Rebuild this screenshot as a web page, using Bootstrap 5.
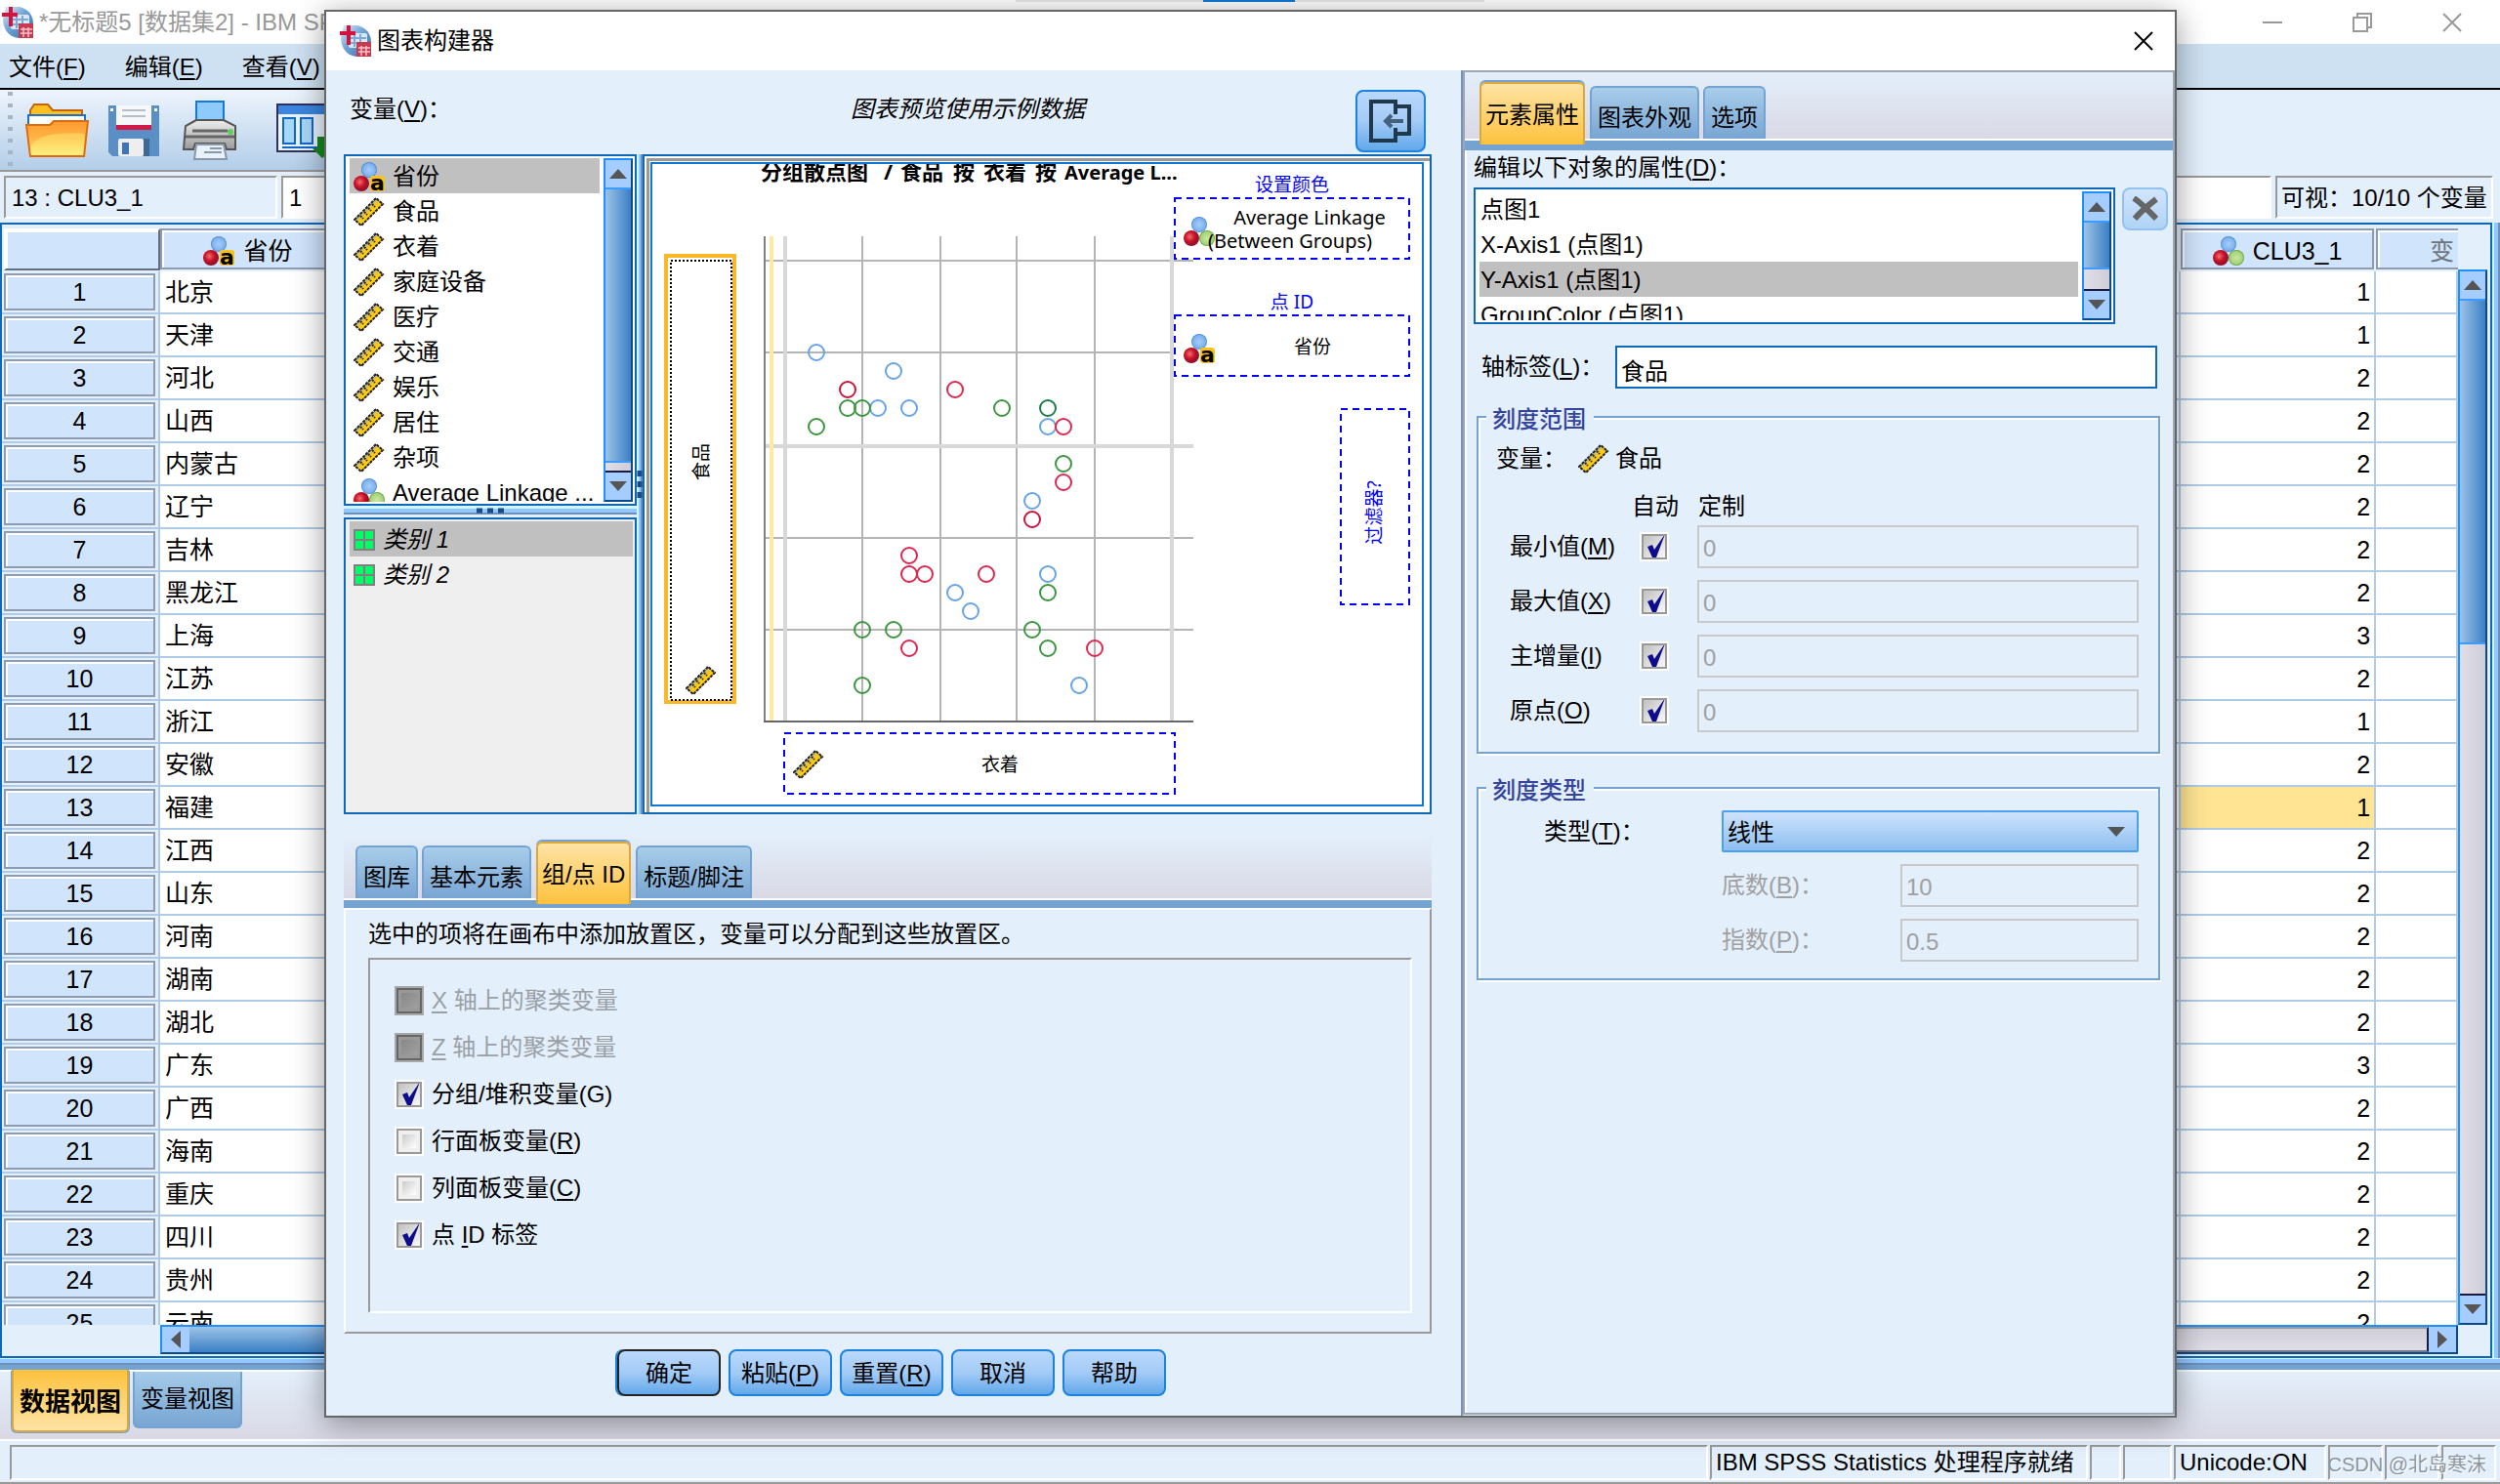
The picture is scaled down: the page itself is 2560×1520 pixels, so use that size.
<!DOCTYPE html>
<html lang="zh-CN">
<head>
<meta charset="utf-8">
<meta name="viewport" content="width=device-width, initial-scale=1">
<title>图表构建器</title>
<link href="https://cdn.jsdelivr.net/npm/bootstrap@5.3.0/dist/css/bootstrap.min.css" rel="stylesheet">
<style>
:root{--pane:#e3effb;--edge:#0f67b8;--band:#74a3d2;--sel:#c0c0c0;--line:#b0cbe6}
html,body{height:100%}
body{font:24px/32px "Liberation Sans","Noto Sans CJK SC",sans-serif;color:#000;background:var(--pane);overflow:hidden}
button,input,select{font:inherit;color:inherit}
svg{display:block;flex:none}
u{text-underline-offset:3px;text-decoration-thickness:2px}
.main-title{height:46px;background:#fff;color:#999;padding:0 3px 0 2px}
.doc-name{width:294px;margin-left:6px;overflow:hidden;white-space:nowrap}
.win-btn{border:0;background:none;padding:0;width:92px;display:flex;justify-content:center}
.stripe-top{left:1040px;top:0;width:480px;height:2px;background:linear-gradient(90deg,#e6e6e6 192px,#0f78d4 192px,#0f78d4 286px,#e6e6e6 286px)}
.menus{height:48px;background:#cee1f2;border-bottom:2px solid #000;padding:2px 0 0 9px;gap:40px}
.menus a{color:#000;text-decoration:none}
.tools{height:84px}
.tools-in{width:50%;height:84px;border-bottom:2px solid #999;background:linear-gradient(#edf4fc,#b3cee9);padding:2px 0 0 8px}
.grip{width:5px;height:80px;background:repeating-linear-gradient(#a9b4c2 0 4px,transparent 4px 12px)}
.tool{border:0;background:none;padding:0}
.info{height:52px;padding:4px 7px 4px 4px;gap:4px}
.sunk{border:2px solid #fff;border-top-color:#999;border-left-color:#999;padding:2px 6px 0;white-space:nowrap;display:flex;align-items:center}
input.sunk{background:#fff;border-radius:0;outline:0;min-width:0}
.sheet{border:2px solid var(--edge);padding-top:4px;min-height:0;position:relative}
.vsplit{width:8px;flex:none;background:linear-gradient(90deg,#c8fbff 2px,#94c6ff 2px,#94c6ff 6px,#6a90bb 6px)}
.clip{overflow:hidden;min-height:0;min-width:0}
.gtable{width:100%;table-layout:fixed;border-collapse:separate;border-spacing:0;font-size:25px}
.gtable th,.gtable td{height:44px;padding:0;font-weight:400;white-space:nowrap;overflow:hidden}
.gtable td{background:#fff;border-right:2px solid var(--line);border-bottom:2px solid var(--line);padding:0 5px;line-height:32px}
.gtable td.num{text-align:right;padding-right:4px}
.gtable td.hot{background:#ffe593}
.gtable tbody th{border-right:2px solid var(--line);border-bottom:2px solid var(--line);padding:2px 3px 2px 2px}
.keybox{height:38px;border:2px solid #8f9bb3;background:#d0e4fb;box-shadow:inset 2px 2px #fff;display:flex;align-items:center;justify-content:center;gap:9px;line-height:30px}
.gtable thead .keybox{height:42px;margin-right:2px;padding-top:4px}
.gtable thead th{vertical-align:top}
.gtable thead .corner .keybox{border-color:#fff #666f80 #666f80 #fff;margin:0 0 0 2px;height:43px}
.vbar,.hbar{border:2px solid #1e90ff;border-right-color:#0a4a8c;border-bottom-color:#0a4a8c;display:flex;flex:none}
.vbar{width:30px;flex-direction:column}
.hbar{height:30px}
.arr{background:#a5cdff;border:0;padding:0;display:flex;align-items:center;justify-content:center;flex:none}
.vbar .arr{height:28px}.hbar .arr{width:28px}
.vbar .thumb{background:linear-gradient(90deg,#9dc3e8,#3a80c4);border-top:2px solid #3d9bff;border-bottom:2px solid #3d9bff}
.vbar .rest{background:linear-gradient(90deg,#e0dee8,#cfcdd9);border-bottom:2px solid #1a1a40}
.hbar .thumb{background:linear-gradient(#9dc3e8,#3a80c4)}
.hbar .rest{background:linear-gradient(#d0ced9,#dfdde6);border-top:2px solid #999;border-bottom:2px solid #778;border-right:2px solid #1a1a40}
.hsplit{height:12px;background:linear-gradient(#c8fbff 1px,#94c6ff 1px,#94c6ff 5px,#6a90bb 5px,#6a90bb 7px,var(--band) 7px)}
.views{height:72px;border-top:2px solid #fff;background:linear-gradient(#e3effb,#d9d8e5);padding-left:12px;gap:4px}
.views button{border:2px solid var(--band);border-top:0;border-radius:0 0 6px 6px;height:58px;width:112px;padding:0;background:linear-gradient(#a5cbe9,#78a5d3);white-space:nowrap}
.views button.on{width:120px;height:64px;margin-top:-2px;padding-top:4px;background:linear-gradient(#fdc23d,#fee3a5);border-color:#dba93a;box-shadow:1px 1px var(--band),-1px 1px var(--band);font-weight:700;font-size:26px}
.status{height:46px;border-top:2px solid #fff;border-bottom:2px solid #999;padding:4px 4px 2px 10px;gap:2px}
.status .sunk{padding:0 4px;flex:none}
.csdn{right:14px;bottom:2px;font-size:20px;color:#8d959f;text-shadow:1px 1px #fff}
/* dialog window */
.dlg{left:332px;top:10px;right:331px;bottom:68px;background:var(--pane);border:2px solid #666;box-shadow:0 6px 30px rgba(0,0,0,.4);z-index:5}
.dlg-title{height:60px;background:#fff;padding:0 16px 0 14px;gap:6px}
.lpane{padding:0 30px 0 18px;min-width:0}
.lhead{height:86px;padding:20px 6px 0}
.skin{border:2px solid #1b82de;border-radius:8px;background:linear-gradient(#bad8fb,#a3cbf7 50%,#62a8ea);padding:0;display:flex;align-items:center;justify-content:center}
.frame{border:2px solid var(--edge);background:#fff;padding:2px 2px 2px 4px;overflow:hidden}
.vlist{margin:0;padding:0;list-style:none;overflow:hidden;flex:1 1 0;min-width:0;background:#fff}
.vlist li{height:36px;display:flex;align-items:center;gap:8px;padding:2px 0 0 4px;white-space:nowrap;line-height:34px}
.vlist li.on{background:var(--sel)}
.vlist.flush li{padding-left:1px}
.mid{height:676px}
.lcol{width:300px}
.mini-h{height:8px;margin:1px 0 3px;background:linear-gradient(#c8fbff 2px,#94c6ff 2px,#94c6ff 6px,#6a90bb 6px)}
.mini-v{width:6px;background:linear-gradient(90deg,#c8fbff 2px,#94c6ff 2px,#94c6ff 4px,#6a90bb 4px)}
.stage{border:2px solid var(--edge);padding:6px;background:#fff;box-shadow:inset 2px 2px #fff,inset 5px 5px #9a9a9a}
.stage-in{border:2px solid #0f78d4;background:#fff;overflow:hidden;height:660px}
.tabs{background:linear-gradient(var(--pane),#d9d8e5);border-bottom:2px solid #fff;align-items:flex-end;gap:4px;display:flex}
.tabs button{border:2px solid var(--band);border-bottom:0;border-radius:6px 6px 0 0;height:54px;padding:10px 6px 0;background:linear-gradient(#a8cdea,#78a5d3);white-space:nowrap;line-height:30px}
.tabs button.on{height:64px;margin:0 1px -6px;background:linear-gradient(#fee3a5,#fdc23d);border-color:#dba93a;box-shadow:0 -2px 0 0 var(--band);padding:2px 4px 0;position:relative}
.band{background:var(--band)}
.tpanel{height:436px;border-left:2px solid #fff;border-top:2px solid #fff;border-bottom:2px solid #999;border-right:2px solid #999;padding:9px 18px 0 23px}
.inset-box{height:364px;border:2px solid #fff;border-top-color:#999;border-left-color:#999;margin-top:8px;padding:18px 25px}
.opt{height:48px;gap:8px}
.opt.off{color:#9aa0a6}
.form-check-input.tick{width:30px;height:30px;margin:0;flex:none;border-radius:0;border:2px solid #fff;background:linear-gradient(135deg,#ccc,#fff) center/14px 14px no-repeat,#f0f0f0;box-shadow:inset 0 0 0 2px #999;opacity:1}
.form-check-input.tick:checked{background:url("data:image/svg+xml,%3Csvg xmlns='http://www.w3.org/2000/svg' viewBox='0 0 26 26'%3E%3Cpath d='M6 13l5-2 2 5L24 0 15 24h-4z' fill='%230c0c8c'/%3E%3C/svg%3E") center/26px no-repeat,linear-gradient(135deg,#bbb,#fff)}
.form-check-input.tick.dark:disabled{border-color:#a8a8a8;background:linear-gradient(135deg,#808080,#a8a8a8);box-shadow:inset 0 0 0 2px #666,inset 0 0 0 5px #999}
.acts{gap:8px;margin-top:16px;padding-left:8px}
.acts button{width:106px;height:48px;padding-top:2px}
.acts button.def{border-color:#222;box-shadow:-2px 0 #1b82de}
.divider{width:2px;background:#7a93b5}
.rpane{width:729px;flex:none;border:2px solid #9ca6b5;box-shadow:inset 2px 2px #fff;margin-bottom:1px}
.rbody{padding:2px 12px 0 9px}
.fld{border:2px solid #0f67b8;height:44px;border-radius:0;padding:6px 4px 2px;background:#fff;outline:0;min-width:0;width:100%}
.fld:disabled{border-color:#c9c9c9;background:var(--pane);color:#a0a0a0}
.set{border:2px solid var(--band);box-shadow:inset 2px 2px #fff,1px 2px #fff;position:relative}
.set>h2{position:absolute;left:8px;top:-14px;background:var(--pane);font-size:24px;line-height:32px;color:#35459c;margin:0;padding:0 8px 0 6px}
.scale-grid{display:grid;grid-template-columns:133px 59px 1fr;row-gap:12px;align-items:center;margin-top:3px}
.pick{appearance:none;border:2px solid #4aa0ec;border-radius:2px;height:43px;padding:2px 4px 0;width:100%;line-height:36px;background:url("data:image/svg+xml,%3Csvg xmlns='http://www.w3.org/2000/svg' viewBox='0 0 18 10'%3E%3Cpath d='M0 0h18L9 10z' fill='%23555'/%3E%3C/svg%3E") right 12px center/18px 10px no-repeat,linear-gradient(#cde2fc,#8dbff0)}
.type-grid{display:grid;grid-template-columns:182px 183px 1fr;row-gap:12px;align-items:center}
.dim{color:#a0a0a0}
</style>
<script src="https://cdn.jsdelivr.net/npm/bootstrap@5.3.0/dist/js/bootstrap.bundle.min.js"></script>
</head>
<body class="d-flex flex-column position-relative">
<svg width="0" height="0" class="position-absolute" aria-hidden="true">
<defs>
<radialGradient id="gb"><stop offset="0" stop-color="#a6cdf8"/><stop offset=".8" stop-color="#7fb2ee"/><stop offset="1" stop-color="#3f83cf"/></radialGradient>
<radialGradient id="gr" cx=".4" cy=".4"><stop offset="0" stop-color="#f07070"/><stop offset=".6" stop-color="#cc1428"/><stop offset="1" stop-color="#98102a"/></radialGradient>
<radialGradient id="gg"><stop offset="0" stop-color="#c8eaa0"/><stop offset=".8" stop-color="#a5d27c"/><stop offset="1" stop-color="#5b9c2f"/></radialGradient>
<linearGradient id="fo" x2="0" y2="1"><stop offset="0" stop-color="#ff9a2e"/><stop offset=".5" stop-color="#ffb648"/><stop offset="1" stop-color="#fff48a"/></linearGradient>
<linearGradient id="pr" x2="0" y2="1"><stop offset="0" stop-color="#eee"/><stop offset="1" stop-color="#999"/></linearGradient>
<linearGradient id="ba" x2="1" y2="1"><stop offset="0" stop-color="#e4eefa"/><stop offset=".45" stop-color="#6fa3d4"/><stop offset="1" stop-color="#2f6cab"/></linearGradient>
<symbol id="i-rule" viewBox="0 0 32 30"><path d="M1 23L23 1l7 6L8 29z" fill="#b9b98a"/><path d="M5 26L27 4l3 3L8 29l-3-3z" fill="#ffcb10"/><path d="M3 24L25 2l5 5L8 29z" fill="#ffcb10" opacity=".7"/><path d="M1 23L23 1l7 6L8 29z" fill="none" stroke="#222" stroke-width="2" stroke-dasharray="3 1"/><path d="M7 19l3 3M11 15l3 3M15 11l3 3M19 7l3 3" stroke="#222" stroke-width="2" stroke-dasharray="2 1"/></symbol>
<symbol id="i-nom" viewBox="0 0 32 30"><circle cx="16" cy="8" r="8" fill="url(#gb)"/><circle cx="8" cy="22" r="8" fill="url(#gr)"/><circle cx="24" cy="22" r="8" fill="url(#gg)"/></symbol>
<symbol id="i-str" viewBox="0 0 32 30"><circle cx="16" cy="8" r="8" fill="url(#gb)"/><circle cx="8" cy="22" r="8" fill="url(#gr)"/><rect x="17" y="14" width="15" height="16" rx="3" fill="#fbc21e"/><text x="17" y="29" font-family="DejaVu Sans" font-weight="700" font-size="22" fill="#000">a</text></symbol>
<symbol id="i-app" viewBox="0 0 32 32"><path d="M4 0h14c9 2 14 9 14 17v15H17C7 31 1 23 1 12z" fill="url(#ba)"/><rect x="9" y="8" width="19" height="15" rx="2" fill="#d9e7f7"/><path d="M10 13h17M10 18h17M15 9v13M21 9v13" stroke="#7fa8d4" stroke-width="2"/><path d="M9 0v20M0 8h16" stroke="#d3123d" stroke-width="4"/><rect x="17" y="17" width="15" height="15" fill="#c83a50"/><path d="M19 23h12M19 27h12M22 21v10M27 21v10" stroke="#f3c3ca" stroke-width="1.5"/></symbol>
<symbol id="i-up" viewBox="0 0 18 10"><path d="M9 0l9 10H0z" fill="#555"/></symbol>
<symbol id="i-dn" viewBox="0 0 18 10"><path d="M0 0h18L9 10z" fill="#555"/></symbol>
<symbol id="i-cat" viewBox="0 0 22 22"><path d="M0 0h22v22H0z" fill="#808080"/><path d="M2 2h8v8H2zM12 2h8v8h-8zM2 12h8v8H2zM12 12h8v8h-8z" fill="#00ff66"/></symbol>
</defs>
</svg>

<header class="main-title d-flex align-items-center position-relative">
  <svg width="32" height="32"><use href="#i-app"/></svg>
  <span class="doc-name me-auto">*无标题5 [数据集2] - IBM SPSS</span>
  <button class="win-btn" aria-label="最小化"><svg width="20" height="20"><path d="M0 10h20" stroke="#999" stroke-width="2"/></svg></button>
  <button class="win-btn" aria-label="还原"><svg width="20" height="20" fill="none" stroke="#999" stroke-width="2"><path d="M1 5h14v14H1zM5 5V1h14v14h-4"/></svg></button>
  <button class="win-btn" aria-label="关闭"><svg width="20" height="20"><path d="M1 1l18 18M19 1L1 19" stroke="#999" stroke-width="2"/></svg></button>
  <div class="stripe-top position-absolute"></div>
</header>
<nav class="menus d-flex align-items-center text-nowrap"><a href="#">文件(<u>F</u>)</a><a href="#">编辑(<u>E</u>)</a><a href="#">查看(<u>V</u>)</a></nav>
<div class="tools"><div class="tools-in d-flex align-items-center">
  <div class="grip"></div>
  <button class="tool ms-2 ps-1" aria-label="打开"><svg width="66" height="58" viewBox="0 0 66 58"><path d="M6 22V8l4-6h14l5 6h30v12" fill="#ffc01e" stroke="#c0650e" stroke-width="2"/><path d="M4 24V13h58v11" fill="#fff" stroke="#1c6fd0" stroke-width="2"/><path d="M2 23h24l4-4h35l-4 36H6z" fill="url(#fo)" stroke="#e06a0c" stroke-width="2"/><path d="M6 48c4-14 22-18 56-16l-2 22H7z" fill="#fff27a" opacity=".45"/></svg></button>
  <button class="tool ms-3 ps-1" aria-label="保存"><svg width="52" height="54" viewBox="0 0 52 54"><path d="M0 1h52v52H4l-4-4z" fill="#5a8fc5"/><path d="M8 1h36v24H8z" fill="#f5f7fa"/><path d="M14 6h24M14 12h24" stroke="#b8bec6" stroke-width="2"/><path d="M8 21h36v5H8z" fill="#d11a48"/><path d="M2 4h3v3H2zM47 4h3v3h-3z" fill="#fff"/><rect x="10" y="35" width="26" height="18" rx="2" fill="#eee"/><path d="M14 39h7v12h-7z" fill="#3d76b4"/><path d="M36 35h6v18h-6z" fill="#3f6894"/></svg></button>
  <button class="tool ms-4" aria-label="打印"><svg width="56" height="62" viewBox="0 0 56 62"><path d="M14 1h28v22H14z" fill="#8fcafc" stroke="#1879d2" stroke-width="2"/><path d="M14 20L3 26 1 50h10l2-6h30l2 6h9V26l-12-6z" fill="url(#pr)" stroke="#555" stroke-width="2"/><path d="M10 31h36M3 37h50" stroke="#666" stroke-width="3"/><circle cx="49" cy="32" r="3" fill="#5ad25a"/><path d="M14 45h28l3 15H12z" fill="#e8f2fd" stroke="#8a97a6" stroke-width="2"/><path d="M28 49h12M22 53h18" stroke="#8a97a6" stroke-width="2"/></svg></button>
  <button class="tool ms-4 ps-3" aria-label="重新调用对话框"><svg width="70" height="56" viewBox="0 0 70 56"><path d="M1 1h60v48H1z" fill="#eaf4fe" stroke="#30305c" stroke-width="2"/><path d="M2 2h58v9H2z" fill="#3a86e0"/><path d="M7 15h12v26H7zM25 15h12v26H25z" fill="#a8d8f8" stroke="#0f67c8" stroke-width="2"/><path d="M6 45h40" stroke="#0f67c8" stroke-width="2"/><path d="M42 34h10v12h6L47 56 37 46h5z" fill="#158a1e"/></svg></button>
</div></div>
<div class="info d-flex">
  <div class="sunk" style="width:280px">13 : CLU3_1</div>
  <input class="sunk flex-grow-1" value="1" aria-label="单元格值">
  <div class="sunk px-1" style="width:223px">可视：10/10 个变量</div>
</div>

<main class="d-flex flex-grow-1 clip">
  <section class="sheet d-flex flex-column flex-grow-1 clip">
    <div class="d-flex flex-grow-1 clip">
      <div class="clip flex-grow-1">
        <table class="gtable"><colgroup><col style="width:162px"><col style="width:182px"><col><col style="width:200px"><col style="width:84px"></colgroup>
        <thead><tr><th class="corner"><div class="keybox"></div></th><th><div class="keybox"><svg width="32" height="30"><use href="#i-str"/></svg>省份</div></th><th></th><th><div class="keybox"><svg width="32" height="30"><use href="#i-nom"/></svg>CLU3_1</div></th><th><div class="keybox justify-content-end text-secondary me-0 border-end-0 pe-1">变</div></th></tr></thead>
        <tbody id="rows"></tbody></table>
      </div>
      <div class="d-flex flex-column flex-shrink-0" style="padding-top:42px;margin-right:3px">
        <div class="vbar flex-grow-1"><button class="arr" aria-label="上"><svg width="18" height="10"><use href="#i-up"/></svg></button><div class="thumb" style="flex:352"></div><div class="rest" style="flex:668"></div><button class="arr" aria-label="下"><svg width="18" height="10"><use href="#i-dn"/></svg></button></div>
      </div>
    </div>
    <div style="padding:0 33px 2px 162px"><div class="hbar"><button class="arr" aria-label="左"><svg width="10" height="18"><path d="M10 0v18L0 9z" fill="#555"/></svg></button><div class="thumb" style="flex:1"></div><div class="rest" style="flex:1"></div><button class="arr" aria-label="右"><svg width="10" height="18"><path d="M0 0v18l10-9z" fill="#555"/></svg></button></div></div>
  </section>
  <div class="vsplit"></div>
</main>
<div class="hsplit"></div>
<div class="views d-flex align-items-start"><button class="on">数据视图</button><button>变量视图</button></div>
<footer class="status d-flex position-relative">
  <div class="sunk flex-fill"></div><div class="sunk" style="width:387px">IBM SPSS Statistics 处理程序就绪</div><div class="sunk" style="width:32px"></div><div class="sunk" style="width:50px"></div><div class="sunk" style="width:156px">Unicode:ON</div><div class="sunk" style="width:56px"></div><div class="sunk" style="width:56px"></div><div class="sunk" style="width:56px"></div>
  <span class="csdn position-absolute">CSDN @北岛寒沫</span>
</footer>

<div class="dlg position-absolute d-flex flex-column" role="dialog" aria-labelledby="dt">
  <div class="dlg-title d-flex align-items-center"><svg width="32" height="32"><use href="#i-app"/></svg><span id="dt" class="flex-grow-1">图表构建器</span><button class="win-btn w-auto" aria-label="关闭"><svg width="32" height="20"><path d="M7 1l18 18M25 1L7 19" stroke="#000" stroke-width="2"/></svg></button></div>
  <div class="d-flex flex-grow-1 clip">
    <section class="lpane flex-grow-1 d-flex flex-column">
      <div class="lhead d-flex align-items-start">
        <label class="pt-1 text-nowrap" style="width:236px">变量(<u>V</u>)：</label><em class="pt-1 flex-grow-1 text-center">图表预览使用示例数据</em>
        <button class="skin" style="width:72px;height:64px" aria-label="切换侧栏"><svg width="46" height="46" fill="none" stroke="#20384c" stroke-width="4"><path d="M28 16V3H3v40h25V30M28 8h14v28H28"/><path d="M18 23h18M24 17l-6 6 6 6" stroke="#44617c"/></svg></button>
      </div>
      <div class="mid d-flex">
        <div class="lcol d-flex flex-column">
          <div class="frame d-flex" style="height:360px"><ul class="vlist me-1" id="vars"></ul>
            <div class="vbar"><button class="arr" aria-label="上"><svg width="18" height="10"><use href="#i-up"/></svg></button><div class="thumb flex-grow-1"></div><div class="rest" style="height:10px"></div><button class="arr" aria-label="下"><svg width="18" height="10"><use href="#i-dn"/></svg></button></div></div>
          <div class="mini-h d-flex justify-content-center"><svg width="28" height="8"><path d="M0 4h28" stroke="#1b4a8c" stroke-width="5" stroke-dasharray="6 5"/></svg></div>
          <div class="frame flex-grow-1" style="background:#efefef"><ul class="vlist bg-transparent"><li class="on"><svg width="22" height="22"><use href="#i-cat"/></svg><em>类别 1</em></li><li><svg width="22" height="22"><use href="#i-cat"/></svg><em>类别 2</em></li></ul></div>
        </div>
        <div class="mini-v d-flex align-items-center"><svg width="6" height="28"><path d="M3 0v28" stroke="#1b4a8c" stroke-width="5" stroke-dasharray="6 5"/></svg></div>
        <div class="stage flex-grow-1"><div class="stage-in">
          <svg id="plot" width="788" height="656" viewBox="668 168 788 656" font-family="'Noto Sans','Noto Sans CJK SC',sans-serif" font-size="19">
            <g font-weight="700" font-size="22"><text x="779" y="184">分组散点图</text><text x="905" y="184">/</text><text x="922" y="184">食品</text><text x="976" y="184">按</text><text x="1007" y="184">衣着</text><text x="1060" y="184">按</text><text x="1090" y="184" font-size="20">Average L...</text></g>
            <g stroke="#b4b4b4" stroke-width="2"><path d="M883 242v497M963 242v497M1041 242v497M1121 242v497M782 267h440M782 361h440M782 551h440M782 645h440"/><path d="M804 242v497M1200 242v497M782 457h440" stroke="#d8d8d8" stroke-width="4"/></g>
            <path d="M790 242v497" stroke="#ffe9a3" stroke-width="4"/><path d="M783 242v497" stroke="#808080" stroke-width="2"/><path d="M782 739h440" stroke="#666" stroke-width="2"/>
            <g id="pts" fill="none" stroke-width="2"></g>
            <rect x="682" y="262" width="70" height="457" fill="#fff" stroke="#fab728" stroke-width="4"/><rect x="687" y="267" width="62" height="450" fill="none" stroke="#000" stroke-width="2" stroke-dasharray="2 2"/>
            <text transform="translate(725 473) rotate(-90)" text-anchor="middle">食品</text><use href="#i-rule" x="702" y="682" width="32" height="30"/>
            <g fill="#fff" stroke="#00f" stroke-width="2" stroke-dasharray="7 5"><rect x="803" y="751" width="400" height="62"/><rect x="1203" y="203" width="240" height="62"/><rect x="1203" y="323" width="240" height="62"/><rect x="1373" y="419" width="70" height="200"/></g>
            <use href="#i-rule" x="812" y="768" width="32" height="30"/><text x="1024" y="790" text-anchor="middle">衣着</text>
            <text x="1323" y="196" text-anchor="middle" fill="#00f">设置颜色</text><use href="#i-nom" x="1212" y="222" width="32" height="30"/>
            <g font-size="20"><text x="1341" y="230" text-anchor="middle">Average Linkage</text><text x="1321" y="254" text-anchor="middle">(Between Groups)</text></g>
            <text x="1323" y="316" text-anchor="middle" fill="#00f">点 ID</text><use href="#i-str" x="1212" y="342" width="32" height="30"/><text x="1344" y="362" text-anchor="middle">省份</text>
            <text transform="translate(1414 525) rotate(-90)" text-anchor="middle" fill="#00f">过滤器?</text>
          </svg></div></div>
      </div>
      <div class="tabs" style="height:67px;margin-top:21px;padding-left:12px"><button>图库</button><button>基本元素</button><button class="on">组/点 ID</button><button>标题/脚注</button></div>
      <div class="band" style="height:8px"></div>
      <div class="tpanel"><div>选中的项将在画布中添加放置区，变量可以分配到这些放置区。</div>
        <div class="inset-box">
          <label class="opt off d-flex align-items-center"><input type="checkbox" class="form-check-input tick dark" disabled><span><u>X</u> 轴上的聚类变量</span></label>
          <label class="opt off d-flex align-items-center"><input type="checkbox" class="form-check-input tick dark" disabled><span><u>Z</u> 轴上的聚类变量</span></label>
          <label class="opt d-flex align-items-center"><input type="checkbox" class="form-check-input tick" checked><span>分组/堆积变量(G)</span></label>
          <label class="opt d-flex align-items-center"><input type="checkbox" class="form-check-input tick"><span>行面板变量(<u>R</u>)</span></label>
          <label class="opt d-flex align-items-center"><input type="checkbox" class="form-check-input tick"><span>列面板变量(<u>C</u>)</span></label>
          <label class="opt d-flex align-items-center"><input type="checkbox" class="form-check-input tick" checked><span>点 <u>I</u>D 标签</span></label>
        </div></div>
      <div class="acts d-flex justify-content-center"><button class="skin def">确定</button><button class="skin"><span>粘贴(<u>P</u>)</span></button><button class="skin"><span>重置(<u>R</u>)</span></button><button class="skin">取消</button><button class="skin">帮助</button></div>
    </section>
    <div class="divider"></div>
    <section class="rpane">
      <div class="tabs" style="height:70px;padding-left:14px"><button class="on">元素属性</button><button>图表外观</button><button>选项</button></div>
      <div class="band" style="height:10px"></div>
      <div class="rbody">
        <div>编辑以下对象的属性(<u>D</u>)：</div>
        <div class="d-flex align-items-start mt-1" style="gap:7px;margin-right:-7px">
          <div class="frame d-flex flex-grow-1" style="height:140px"><ul class="vlist flush me-1" id="props"><li>点图1</li><li>X-Axis1 (点图1)</li><li class="on">Y-Axis1 (点图1)</li><li>GroupColor (点图1)</li></ul>
            <div class="vbar"><button class="arr" aria-label="上"><svg width="18" height="10"><use href="#i-up"/></svg></button><div class="thumb flex-grow-1"></div><div class="rest" style="height:22px"></div><button class="arr" aria-label="下"><svg width="18" height="10"><use href="#i-dn"/></svg></button></div></div>
          <button class="skin" style="width:47px;height:44px;border-color:#94c2f0;background:linear-gradient(#d2e5fb,#b0d3f6)" aria-label="删除"><svg width="30" height="26"><path d="M3 2c8 5 16 14 23 21M26 3C18 9 10 16 4 23" stroke="#666" stroke-width="6" fill="none"/></svg></button>
        </div>
        <div class="d-flex align-items-center ps-2 pe-1" style="margin-top:22px"><label for="ax" class="text-nowrap flex-shrink-0" style="width:137px">轴标签(<u>L</u>)：</label><input id="ax" class="fld" value="食品"></div>
        <div class="set" style="height:346px;margin:28px 1px 0 3px;padding:26px 20px 0 18px"><h2>刻度范围</h2>
          <div class="d-flex align-items-center"><span>变量：</span><svg width="32" height="30" style="margin:0 6px 0 12px"><use href="#i-rule"/></svg>食品</div>
          <div class="d-flex" style="padding:17px 0 0 139px;gap:20px"><span>自动</span><span>定制</span></div>
          <div class="scale-grid" id="scale" style="padding-left:14px"></div>
        </div>
        <div class="set" style="height:198px;margin:34px 1px 0 3px;padding:22px 20px 0 67px"><h2>刻度类型</h2>
          <div class="type-grid">
            <label for="ty">类型(<u>T</u>)：</label><select id="ty" class="pick" style="grid-column:2/4"><option>线性</option></select>
            <span></span><label for="ba1" class="dim">底数(<u>B</u>)：</label><input id="ba1" class="fld" value="10" disabled>
            <span></span><label for="ex1" class="dim">指数(<u>P</u>)：</label><input id="ex1" class="fld" value="0.5" disabled>
          </div></div>
      </div>
    </section>
  </div>
</div>
<script>
// data sheet rows: province and cluster number
const names='北京 天津 河北 山西 内蒙古 辽宁 吉林 黑龙江 上海 江苏 浙江 安徽 福建 江西 山东 河南 湖南 湖北 广东 广西 海南 重庆 四川 贵州 云南'.split(' ');
const clu='1122222232121222223222222';
document.getElementById('rows').innerHTML=names.map((n,i)=>`<tr><th><div class="keybox">${i+1}</div></th><td>${n}</td><td></td><td class="num${i===12?' hot':''}">${clu[i]}</td><td></td></tr>`).join('');
const vars=[['str','省份'],...'食品 衣着 家庭设备 医疗 交通 娱乐 居住 杂项'.split(' ').map(v=>['rule',v]),['nom','Average Linkage ...']];
document.getElementById('vars').innerHTML=vars.map(([k,v],i)=>`<li class="${i?'':'on'}"><svg width="32" height="30"><use href="#i-${k}"/></svg>${v}</li>`).join('');
document.getElementById('scale').innerHTML=[['最小值','M'],['最大值','X'],['主增量','I'],['原点','O']].map(([t,k])=>`<label for="s${k}">${t}(<u>${k}</u>)</label><input id="s${k}" type="checkbox" class="form-check-input tick" checked><input class="fld" value="0" disabled aria-label="${t}">`).join('');
// sample scatter, by colour
const P={'#67a3e8':[[836,361],[915,380],[899,418],[931,418],[1073,437],[1057,513],[1073,588],[978,607],[994,626],[1105,702]],
'#dc2850':[[978,399],[1089,437],[1089,494],[931,569],[931,588],[947,588],[1010,588],[931,664],[1121,664]],
'#c8143c':[[868,399],[1057,532]],
'#3c9640':[[868,418],[883,418],[1026,418],[836,437],[1089,475],[1073,607],[883,645],[915,645],[1057,645],[1073,664],[883,702]],
'#1e7d46':[[1073,418]]};
document.getElementById('pts').innerHTML=Object.entries(P).map(([c,a])=>a.map(([x,y])=>`<circle cx="${x}" cy="${y}" r="8" stroke="${c}"/>`).join('')).join('');
</script>
</body>
</html>
